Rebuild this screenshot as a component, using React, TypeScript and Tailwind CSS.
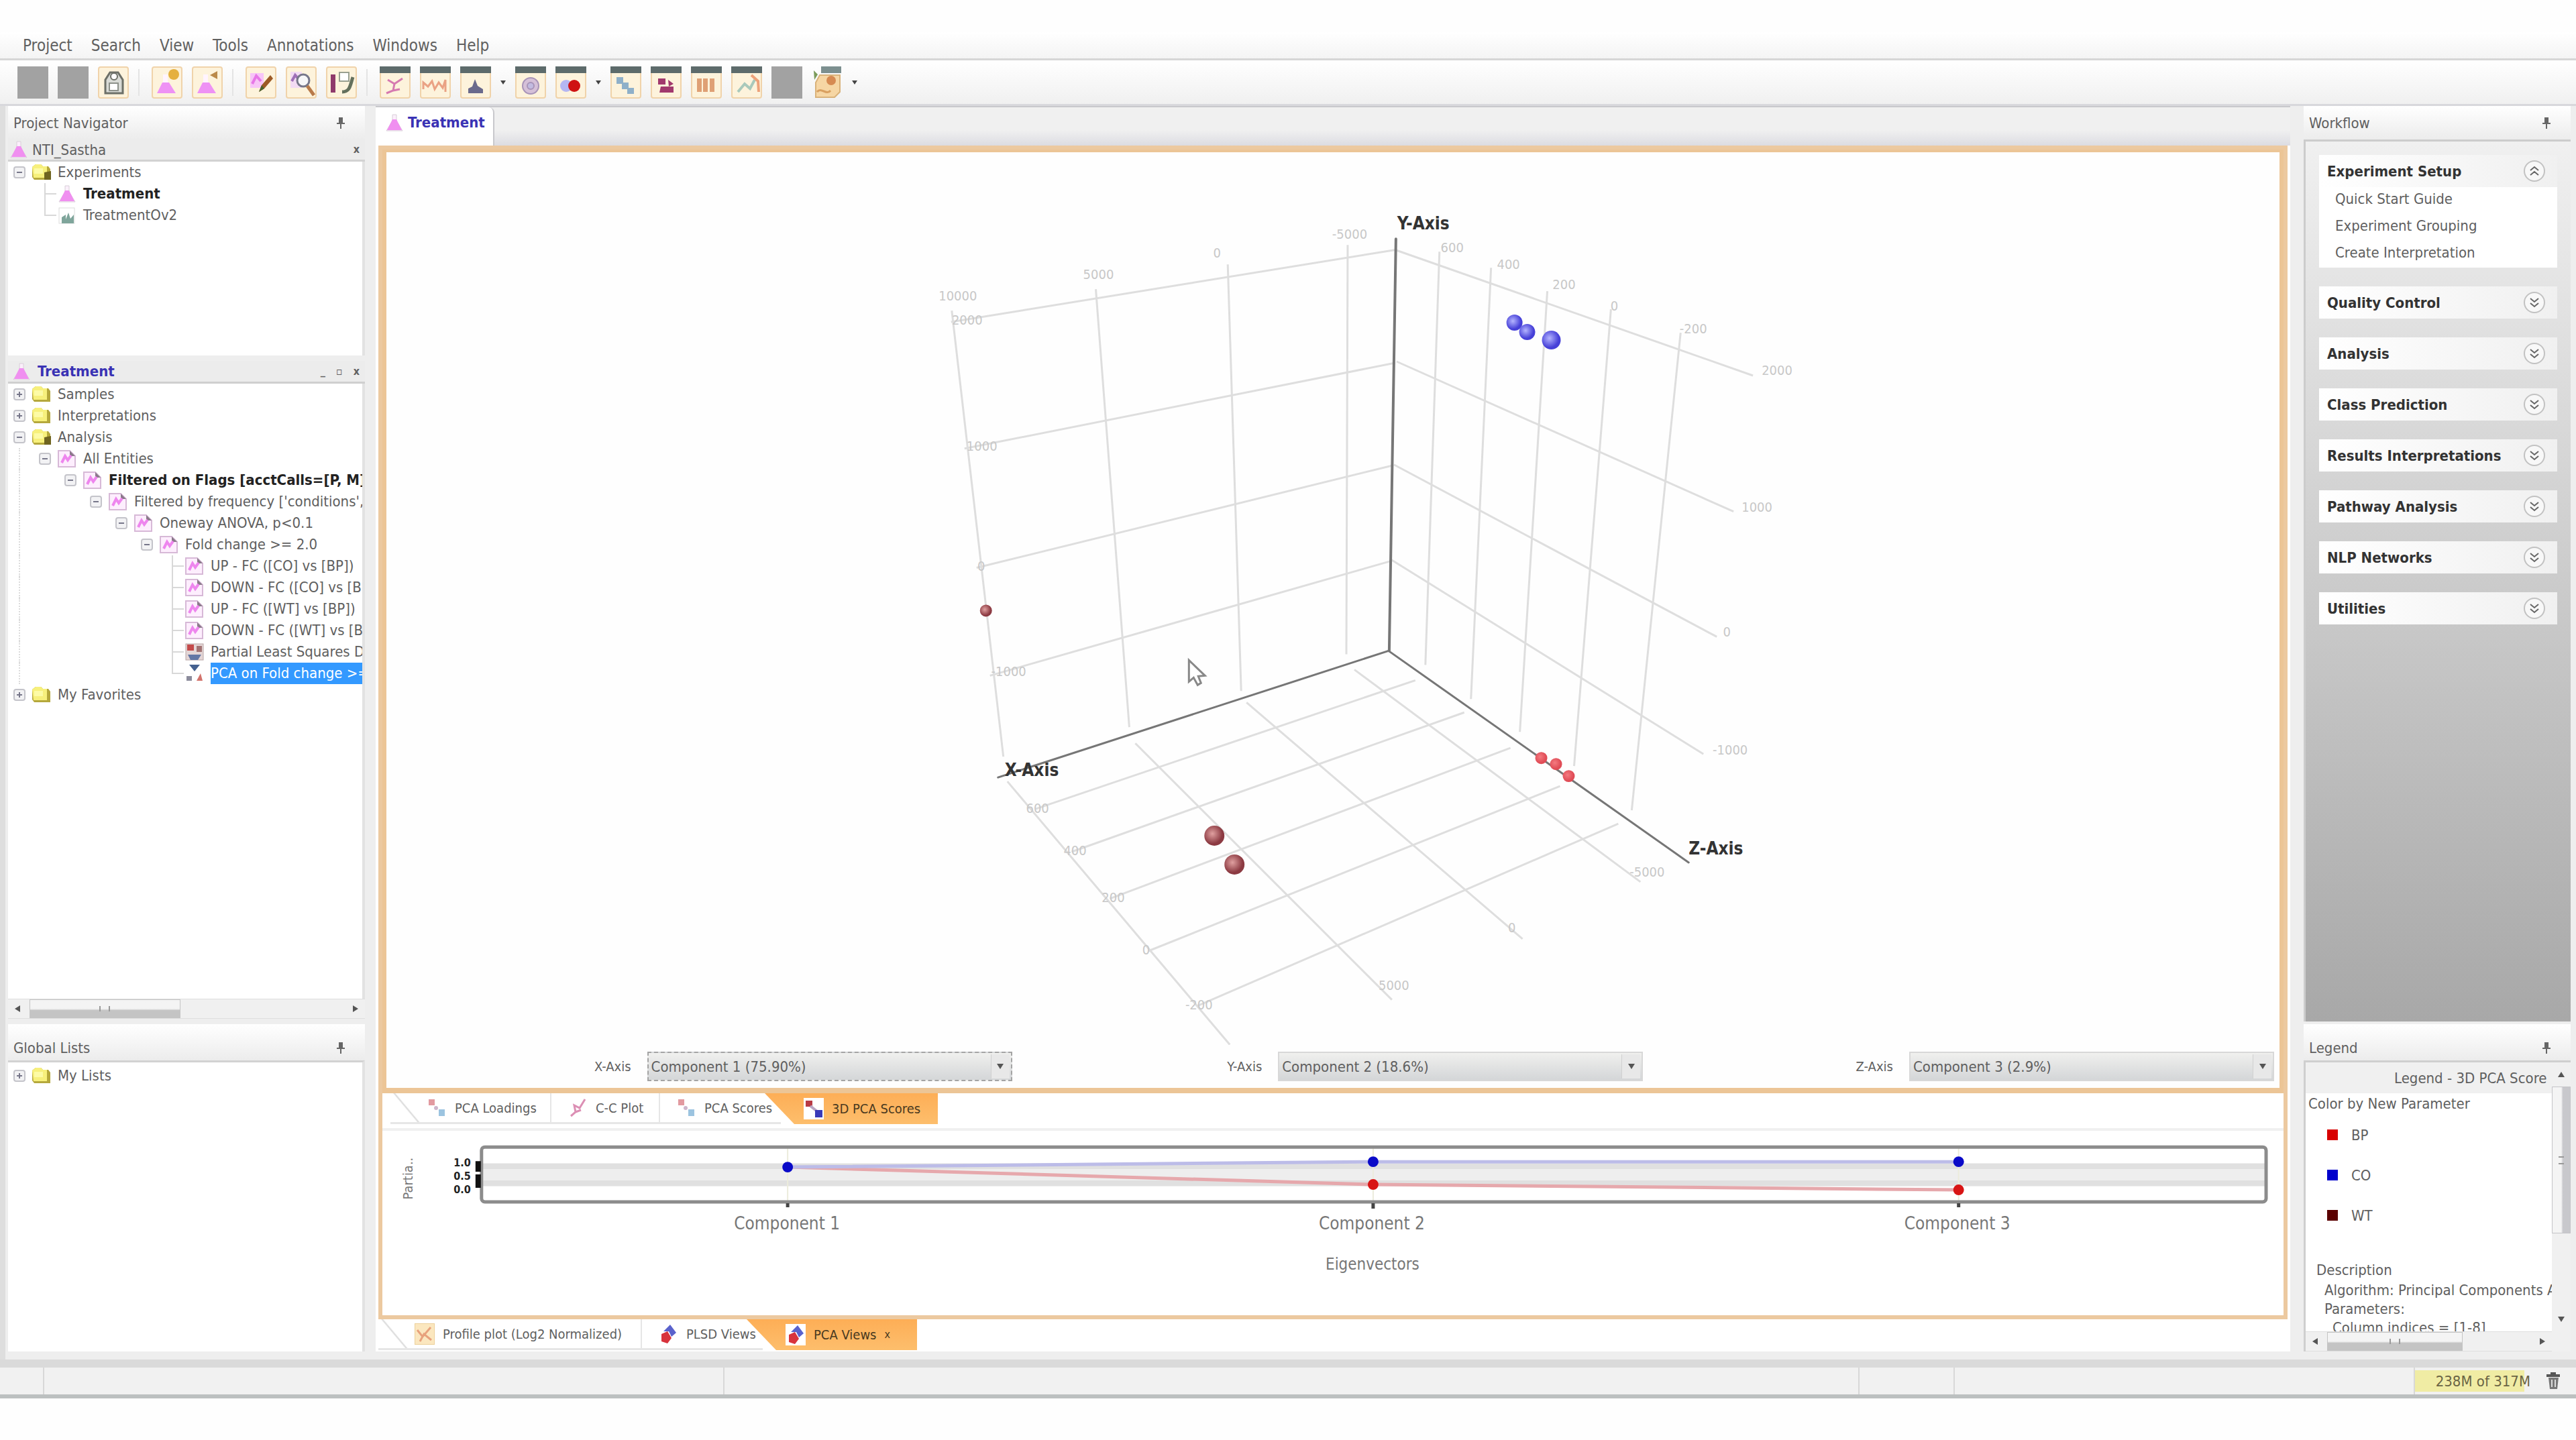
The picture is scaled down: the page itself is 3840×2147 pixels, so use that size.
import React, { useState } from 'react';
import clsx from 'clsx';

type IconName =
  | 'folder'
  | 'folderOpen'
  | 'flask'
  | 'chart'
  | 'list'
  | 'pls'
  | 'pca';

type TreeNode = {
  label: string;
  icon: IconName;
  level: number;
  leaf?: boolean;
  last?: boolean;
  bold?: boolean;
  selected?: boolean;
  open?: boolean;
};

const MENUS = ['Project', 'Search', 'View', 'Tools', 'Annotations', 'Windows', 'Help'];

const TOOLBAR = [
  ['blank', 'blank', 'open'],
  ['newFlask', 'flaskOut'],
  ['edit', 'find', 'sample'],
  ['scatter', 'profile', 'histogram', 'arrow', 'venn', 'redblue', 'arrow', 'matrix', 'heat', 'bars', 'trend', 'blank', 'script', 'arrow'],
];

const PROJECT_TREE: TreeNode[] = [
  { label: 'Experiments', icon: 'folderOpen', level: 0, open: true },
  { label: 'Treatment', icon: 'flask', level: 1, leaf: true, bold: true },
  { label: 'TreatmentOv2', icon: 'chart', level: 1, leaf: true, last: true },
];

const EXPERIMENT_TREE: TreeNode[] = [
  { label: 'Samples', icon: 'folder', level: 0 },
  { label: 'Interpretations', icon: 'folder', level: 0 },
  { label: 'Analysis', icon: 'folderOpen', level: 0, open: true },
  { label: 'All Entities', icon: 'list', level: 1, open: true },
  { label: 'Filtered on Flags [acctCalls=[P, M]', icon: 'list', level: 2, bold: true, open: true },
  { label: "Filtered by frequency ['conditions',", icon: 'list', level: 3, open: true },
  { label: 'Oneway ANOVA, p<0.1', icon: 'list', level: 4, open: true },
  { label: 'Fold change >= 2.0', icon: 'list', level: 5, open: true },
  { label: 'UP - FC ([CO] vs [BP])', icon: 'list', level: 6, leaf: true },
  { label: 'DOWN - FC ([CO] vs [B', icon: 'list', level: 6, leaf: true },
  { label: 'UP - FC ([WT] vs [BP])', icon: 'list', level: 6, leaf: true },
  { label: 'DOWN - FC ([WT] vs [B', icon: 'list', level: 6, leaf: true },
  { label: 'Partial Least Squares Di', icon: 'pls', level: 6, leaf: true },
  { label: 'PCA on Fold change >=', icon: 'pca', level: 6, leaf: true, last: true, selected: true },
  { label: 'My Favorites', icon: 'folder', level: 0 },
];

const WORKFLOW = [
  { title: 'Experiment Setup', items: ['Quick Start Guide', 'Experiment Grouping', 'Create Interpretation'] },
  { title: 'Quality Control', items: [] },
  { title: 'Analysis', items: [] },
  { title: 'Class Prediction', items: [] },
  { title: 'Results Interpretations', items: [] },
  { title: 'Pathway Analysis', items: [] },
  { title: 'NLP Networks', items: [] },
  { title: 'Utilities', items: [] },
];

const LEGEND = [
  { label: 'BP', color: 'bg-[#d80000]' },
  { label: 'CO', color: 'bg-[#0000cc]' },
  { label: 'WT', color: 'bg-[#5a0000]' },
];

const AXES = [
  { axis: 'X-Axis', value: 'Component 1 (75.90%)' },
  { axis: 'Y-Axis', value: 'Component 2 (18.6%)' },
  { axis: 'Z-Axis', value: 'Component 3 (2.9%)' },
];

const NodeIcon = ({ name }: { name: IconName }) => {
  switch (name) {
    case 'folder':
    case 'folderOpen':
      return (
        <svg viewBox="0 0 32 28" className="h-7 w-8 shrink-0">
          <path d="M2 6 L7 2 H15 L18 5 H26 L29 9 V25 H5 L2 21 Z" fill="#b5a83c" />
          <path d="M2 6 L7 2 H15 L18 5 H24 V22 H4 Z" fill="#f7f07c" />
          <path d="M5 8 H18 V16 H5 Z" fill="#fdfba6" />
          {name === 'folderOpen' && <path d="M20 14 L30 12 V25 H20 Z" fill="#6f6420" />}
        </svg>
      );
    case 'flask':
      return (
        <svg viewBox="0 0 32 28" className="h-7 w-8 shrink-0">
          <path d="M13 2 H19 V11 L28 26 H4 L13 11 Z" fill="#fbeffb" stroke="#d8cfd8" />
          <path d="M13 9 H19 L27 25 H5 Z" fill="#f08ff0" />
        </svg>
      );
    case 'chart':
      return (
        <svg viewBox="0 0 32 28" className="h-7 w-8 shrink-0">
          <rect x="4" y="3" width="23" height="23" fill="#fff" stroke="#dcdcdc" />
          <path d="M8 26 V17 L14 13 V20 L18 10 L21 19 L26 13 V26 Z" fill="#7fa59b" />
        </svg>
      );
    case 'list':
      return (
        <svg viewBox="0 0 32 28" className="h-7 w-8 shrink-0">
          <path d="M3 2 H20 L28 10 V26 H3 Z" fill="#fdeefd" stroke="#d7b9d7" strokeWidth="2" />
          <path d="M20 2 L28 10 H20 Z" fill="#8a7a8a" />
          <path d="M8 20 L13 10 L17 16 L22 9" fill="none" stroke="#ee86ee" strokeWidth="4" />
        </svg>
      );
    case 'pls':
      return (
        <svg viewBox="0 0 32 28" className="h-7 w-8 shrink-0">
          <rect x="3" y="2" width="26" height="24" fill="#e4d6d6" stroke="#b8a6a6" />
          <rect x="5" y="3" width="10" height="9" fill="#c44b4b" />
          <rect x="19" y="5" width="8" height="9" fill="#a27373" />
          <path d="M6 18 H26 L21 26 H10 Z" fill="#6377a5" />
        </svg>
      );
    case 'pca':
      return (
        <svg viewBox="0 0 32 28" className="h-7 w-8 shrink-0">
          <rect x="3" y="1" width="26" height="26" fill="#fff" />
          <path d="M8 1 L16 11 L24 1 Z" fill="#44608f" />
          <rect x="4" y="18" width="8" height="7" fill="#8c8c9c" />
          <path d="M19 25 L25 14 L28 25 Z" fill="#d2736c" />
        </svg>
      );
  }
};

const ToolGlyph = ({ name }: { name: string }) => {
  switch (name) {
    case 'open':
      return (
        <g>
          <path d="M11 40 V20 L18 9 H30 L37 20 V40 Z" fill="#d9dbd6" stroke="#6d7068" strokeWidth="3" />
          <circle cx="24" cy="15" r="5" fill="#fff" stroke="#6d7068" strokeWidth="2" />
          <rect x="17" y="25" width="13" height="11" fill="#fff" stroke="#8d918a" strokeWidth="2" />
        </g>
      );
    case 'newFlask':
      return (
        <g>
          <path d="M17 12 H24 V22 L36 40 H8 L17 22 Z" fill="#fff4ff" />
          <path d="M16 24 H26 L36 40 H8 Z" fill="#ee92f4" />
          <circle cx="33" cy="12" r="8" fill="#e5b03f" />
        </g>
      );
    case 'flaskOut':
      return (
        <g>
          <path d="M17 12 H24 V22 L36 40 H8 L17 22 Z" fill="#fff4ff" />
          <path d="M16 24 H26 L36 40 H8 Z" fill="#ee92f4" />
          <path d="M27 13 L38 7 V19 Z" fill="#bb8a4a" />
        </g>
      );
    case 'edit':
      return (
        <g>
          <path d="M7 10 H27 V32 H7 Z" fill="#f7c5f7" />
          <path d="M10 26 L16 14 L23 22" fill="none" stroke="#e777e7" strokeWidth="4" />
          <path d="M20 38 L24 28 L37 13 L41 18 L28 33 Z" fill="#9c5a26" />
          <path d="M20 38 L24 28 L28 33 Z" fill="#47632f" />
        </g>
      );
    case 'find':
      return (
        <g>
          <path d="M7 8 H24 V32 H7 Z" fill="#f3dbf3" />
          <path d="M9 22 L14 13 L20 20" fill="none" stroke="#a070b8" strokeWidth="4" />
          <circle cx="26" cy="21" r="9" fill="#f6f6f8" stroke="#77778a" strokeWidth="3" />
          <path d="M32 29 L42 43" stroke="#b87a4a" strokeWidth="5" />
        </g>
      );
    case 'sample':
      return (
        <g>
          <rect x="7" y="12" width="7" height="27" fill="#8f3a6b" />
          <path d="M20 9 H34 V22 H20 Z" fill="#fff" stroke="#99a090" strokeWidth="2" />
          <path d="M24 38 C36 38 36 28 40 16" fill="none" stroke="#64705c" strokeWidth="5" />
        </g>
      );
    case 'scatter':
      return <path d="M12 20 L22 26 L34 18 M22 26 L20 36 L10 40 M20 36 L30 34" fill="none" stroke="#d67ab0" strokeWidth="3" />;
    case 'profile':
      return <path d="M5 34 V24 L12 30 L18 22 L22 34 L28 24 L34 32 L38 20 V38" fill="none" stroke="#eaa284" strokeWidth="3" />;
    case 'histogram':
      return <path d="M12 40 V33 L18 30 L22 19 L26 29 L34 34 V40 Z" fill="#6a6a8c" />;
    case 'venn':
      return (
        <g fill="#d5c0d8" stroke="#a894b8" strokeWidth="2">
          <circle cx="23" cy="29" r="12" />
          <circle cx="23" cy="29" r="5" fill="#c2bbe0" />
        </g>
      );
    case 'redblue':
      return (
        <g>
          <circle cx="16" cy="29" r="9" fill="#b5b7f2" />
          <circle cx="28" cy="29" r="9" fill="#cf1212" />
        </g>
      );
    case 'matrix':
      return <path d="M9 16 H19 V24 H27 V32 H35 V41 H25 V34 H17 V26 H9 Z" fill="#8fb0c9" />;
    case 'heat':
      return (
        <g fill="#a1396d">
          <path d="M11 18 H22 V27 H11 Z M26 20 L34 26 L27 30 Z M15 30 H34 V39 H13 Z" />
        </g>
      );
    case 'bars':
      return <path d="M9 18 H16 V38 H9 Z M18 18 H25 V38 H18 Z M28 18 H35 V38 H28 Z" fill="#dfa075" />;
    case 'trend':
      return (
        <g fill="none" strokeWidth="4">
          <path d="M10 38 L20 26 L28 33 L35 20" stroke="#a9c9bb" />
          <path d="M30 13 L40 22 L41 38" stroke="#eda27a" />
        </g>
      );
    case 'script':
      return (
        <g>
          <path d="M12 13 H42 V38 L34 46 H6 V24 Z" fill="#f6d6a4" stroke="#d9b27a" strokeWidth="2" />
          <circle cx="29" cy="21" r="7" fill="#d68a52" />
          <path d="M8 38 C14 30 22 44 28 36" fill="none" stroke="#d9a060" strokeWidth="3" />
          <path d="M3 6 L9 12 L4 20 Z" fill="#7a9a5a" />
        </g>
      );
    default:
      return null;
  }
};

const BARRED = ['scatter', 'profile', 'histogram', 'venn', 'redblue', 'matrix', 'heat', 'bars', 'trend'];

const ToolButton = ({ name }: { name: string }) => {
  if (name === 'arrow') {
    return (
      <button aria-label="More" className="w-2">
        <svg viewBox="0 0 8 8" className="h-2 w-2">
          <path d="M0 1 H8 L4 7 Z" fill="#444" />
        </svg>
      </button>
    );
  }
  return (
    <button aria-label={name} className="h-12 w-[46px]">
      <svg viewBox="0 0 46 48" className="h-12 w-[46px]">
        {name === 'blank' && <rect width="46" height="48" fill="#a2a2a2" />}
        {name !== 'blank' && name !== 'script' && (
          <rect x="1" y="1" width="44" height="46" rx="3" fill="#fdf3dc" stroke="#f0d3aa" strokeWidth="2" />
        )}
        {BARRED.includes(name) && <rect width="46" height="10" fill="#5d6b6b" />}
        {name === 'script' && <rect x="14" width="30" height="10" fill="#7c8f8f" />}
        <ToolGlyph name={name} />
      </svg>
    </button>
  );
};

const PinIcon = () => (
  <svg viewBox="0 0 16 20" className="h-5 w-4">
    <path d="M5 2 H11 V10 H14 V12 H9 V19 H7 V12 H2 V10 H5 Z" fill="#666" />
  </svg>
);

const Triangle = ({ dir }: { dir: 'left' | 'right' | 'up' | 'down' }) => (
  <svg
    viewBox="0 0 12 12"
    className={clsx('h-3 w-3 shrink-0', {
      'rotate-90': dir === 'right',
      '-rotate-90': dir === 'left',
      'rotate-180': dir === 'down',
    })}
  >
    <path d="M1 10 L6 2 L11 10 Z" fill="#555" />
  </svg>
);

const PanelHeader = ({ title, tall }: { title: string; tall?: boolean }) => (
  <div
    className={clsx(
      'flex shrink-0 items-center justify-between bg-linear-to-b from-white to-[#ececec] pr-7 pl-2',
      tall ? 'h-[54px] pt-4' : 'h-[50px]',
    )}
  >
    <h2>{title}</h2>
    <button aria-label={`Pin ${title}`}>
      <PinIcon />
    </button>
  </div>
);

const TreeRow = ({ node, guide }: { node: TreeNode; guide?: boolean }) => (
  <li className="flex h-8 items-center whitespace-nowrap">
    {node.level > 0 && (
      <span className="h-full shrink-0" style={{ width: node.level * 38 }}>
        {guide && <span className="ml-4 block h-full border-l-2 border-dotted border-[#dcdcdc]" />}
      </span>
    )}
    {node.leaf ? (
      <svg viewBox="0 0 34 32" className="h-8 w-[34px] shrink-0">
        <path d={node.last ? 'M17 0 V16 H34' : 'M17 0 V32 M17 16 H34'} fill="none" stroke="#d8d8d8" strokeWidth="2" />
      </svg>
    ) : (
      <button aria-label={`Toggle ${node.label}`} className="flex w-[34px] shrink-0 justify-center">
        <svg viewBox="0 0 18 18" className="h-[18px] w-[18px]">
          <rect x="1" y="1" width="16" height="16" rx="3" fill="#f2f2f4" stroke="#c4c4ca" strokeWidth="2" />
          <path d={node.open ? 'M5 9 H13' : 'M5 9 H13 M9 5 V13'} stroke="#77778a" strokeWidth="2" />
        </svg>
      </button>
    )}
    <NodeIcon name={node.icon} />
    <span
      className={clsx(
        'ml-2 h-8 leading-8',
        node.bold && 'font-bold text-[#222]',
        node.selected && 'flex-1 bg-[#3399ff] text-white',
      )}
    >
      {node.label}
    </span>
  </li>
);

const HScroll = ({ thumb }: { thumb: string }) => (
  <div className="flex h-[30px] shrink-0 items-center gap-3 border-y border-[#dedede] bg-[#f0f0f0] px-2">
    <Triangle dir="left" />
    <div className="h-full flex-1">
      <div
        className={clsx(
          'flex h-full items-center justify-center border border-[#c4c4c4] bg-linear-to-b from-[#f4f4f4] from-50% to-[#c4c4c4] to-60%',
          thumb,
        )}
      >
        <span className="h-2 w-4 border-x-2 border-[#999]" />
      </div>
    </div>
    <Triangle dir="right" />
  </div>
);

const LeftSide = () => (
  <aside className="flex w-[532px] shrink-0 flex-col">
    <PanelHeader title="Project Navigator" />
    <div className="flex h-[33px] items-center justify-between border-b-3 border-[#d2d2d2] bg-[#ececec] pr-2">
      <span className="flex items-center gap-1">
        <NodeIcon name="flask" />
        NTI_Sastha
      </span>
      <button aria-label="Close project" className="text-base font-bold">x</button>
    </div>
    <ul className="h-[289px] overflow-hidden border-r-4 border-[#e2e2e2] bg-white">
      {PROJECT_TREE.map((node) => (
        <TreeRow key={node.label} node={node} />
      ))}
    </ul>
    <div className="mt-2 flex h-[34px] items-center justify-between border-b-3 border-[#cfcfcf] bg-[#ececec] pr-2">
      <span className="flex items-center gap-2 pl-1 font-bold text-[#3a32b4]">
        <NodeIcon name="flask" />
        Treatment
      </span>
      <span className="flex gap-4 text-base font-bold">
        <button aria-label="Minimize">_</button>
        <button aria-label="Float">▫</button>
        <button aria-label="Close">x</button>
      </span>
    </div>
    <ul className="min-h-0 flex-1 overflow-hidden border-r-4 border-[#e2e2e2] bg-white">
      {EXPERIMENT_TREE.map((node, i) => (
        <TreeRow key={i} node={node} guide={node.level > 0} />
      ))}
    </ul>
    <HScroll thumb="w-[48%]" />
    <div className="h-2" />
    <PanelHeader title="Global Lists" tall />
    <ul className="h-[434px] shrink-0 border-t-3 border-r-4 border-[#d2d2d2] border-r-[#e2e2e2] bg-white pt-1">
      <TreeRow node={{ label: 'My Lists', icon: 'folder', level: 0 }} />
    </ul>
  </aside>
);

// [x1, y1, x2, y2] segments of the three walls of the plot box
const GRID = [
  [1417, 481, 2082, 373], [1437, 670, 2080, 542], [1455, 848, 2077, 695], [1475, 1009, 2073, 838],
  [1418, 464, 1495, 1130], [1633, 432, 1683, 1086], [1830, 395, 1850, 1032], [2009, 366, 2007, 977],
  [2082, 374, 2614, 561], [2082, 540, 2585, 764], [2078, 694, 2560, 951], [2074, 836, 2540, 1126],
  [2146, 376, 2125, 993], [2223, 400, 2193, 1044], [2307, 435, 2266, 1093], [2402, 462, 2347, 1144],
  [2506, 497, 2433, 1210],
  [1501, 1167, 1833, 1560], [1692, 1110, 2075, 1493], [1858, 1049, 2270, 1402], [2019, 1000, 2446, 1317],
  [1543, 1208, 2110, 1016], [1597, 1272, 2183, 1064], [1654, 1342, 2252, 1117], [1712, 1420, 2326, 1174],
  [1785, 1502, 2413, 1230],
];

const TICKS: [number, number, string][] = [
  [1427, 449, '10000'], [1637, 417, '5000'], [1814, 385, '0'], [2012, 357, '-5000'],
  [1441, 485, '2000'], [1463, 673, '1000'], [1462, 852, '0'], [1503, 1010, '-1000'],
  [2165, 377, '600'], [2249, 402, '400'], [2332, 432, '200'], [2407, 464, '0'], [2525, 498, '-200'],
  [2650, 560, '2000'], [2620, 764, '1000'], [2575, 951, '0'], [2580, 1127, '-1000'],
  [1546, 1214, '600'], [1602, 1277, '400'], [1659, 1347, '200'], [1708, 1425, '0'], [1787, 1507, '-200'],
  [2078, 1478, '5000'], [2254, 1392, '0'], [2456, 1309, '-5000'],
];

const POINTS: [number, number, number, string][] = [
  [1469, 912, 9, 'url(#brown)'], [1810, 1248, 15, 'url(#brown)'], [1840, 1291, 15, 'url(#brown)'],
  [2258, 482, 12, 'url(#blue)'], [2277, 496, 12, 'url(#blue)'], [2313, 508, 14, 'url(#blue)'],
  [2298, 1132, 9, 'url(#red)'], [2320, 1141, 9, 'url(#red)'], [2339, 1159, 9, 'url(#red)'],
];

const ScorePlot = () => (
  <svg viewBox="574 229 2826 1330" className="min-h-0 w-full flex-1">
    <defs>
      <radialGradient id="brown" cx="0.4" cy="0.4">
        <stop offset="0" stopColor="#e0a0a0" />
        <stop offset="1" stopColor="#8c3a42" />
      </radialGradient>
      <radialGradient id="blue" cx="0.4" cy="0.4">
        <stop offset="0" stopColor="#b4b4ff" />
        <stop offset="1" stopColor="#4640d8" />
      </radialGradient>
      <radialGradient id="red" cx="0.4" cy="0.4">
        <stop offset="0" stopColor="#f47a80" />
        <stop offset="1" stopColor="#e04c56" />
      </radialGradient>
    </defs>
    <g stroke="#dedede" strokeWidth="3">
      {GRID.map(([x1, y1, x2, y2], i) => (
        <line key={i} x1={x1} y1={y1} x2={x2} y2={y2} />
      ))}
    </g>
    <g fill="#c8c8c8" fontSize="20" textAnchor="middle">
      {TICKS.map(([x, y, label], i) => (
        <text key={i} x={x} y={y}>{label}</text>
      ))}
    </g>
    <g stroke="#767676" strokeWidth="3" strokeLinecap="round">
      <line x1="2081" y1="357" x2="2071" y2="972" strokeWidth="4" />
      <line x1="2070" y1="972" x2="1487" y2="1161" />
      <line x1="2070" y1="972" x2="2518" y2="1288" />
    </g>
    {POINTS.map(([cx, cy, r, fill], i) => (
      <circle key={i} cx={cx} cy={cy} r={r} fill={fill} />
    ))}
    <g fill="#333" fontSize="26" fontWeight="bold">
      <text x="2083" y="343">Y-Axis</text>
      <text x="1497" y="1159">X-Axis</text>
      <text x="2518" y="1276">Z-Axis</text>
    </g>
    <path d="M1772 986 V1018 L1779 1012 L1785 1023 L1790 1020 L1786 1010 L1796 1009 Z" fill="#fff" stroke="#888" strokeWidth="3" />
  </svg>
);

const EigenPlot = () => (
  <svg viewBox="568 1687 2838 275" className="block h-[275px] w-full">
    <rect x="717" y="1735" width="2662" height="35" fill="#eeeeee" />
    <path d="M717 1740 H3379 M717 1765 H3379" stroke="#e0e0e0" strokeWidth="8" />
    <path d="M1173 1712 V1792 M2047 1712 V1792 M2921 1712 V1792" stroke="#ececdc" strokeWidth="2" />
    <path d="M1173 1741 L2047 1767 L2921 1775" fill="none" stroke="#e6a8ac" strokeWidth="5" />
    <path d="M1173 1741 L2047 1733 H2921" fill="none" stroke="#bcbce8" strokeWidth="5" />
    <rect x="716" y="1711" width="2664" height="82" rx="5" fill="none" stroke="#8c8c8c" strokeWidth="5" />
    <path d="M1173 1795 V1801 M2047 1795 V1803 M2921 1795 V1801" stroke="#444" strokeWidth="5" />
    <path d="M711 1732 V1748 M711 1752 V1772" stroke="#111" strokeWidth="8" />
    <g fill="#0a0ac8">
      <circle cx="1173" cy="1741" r="8" />
      <circle cx="2047" cy="1733" r="8" />
      <circle cx="2921" cy="1733" r="8" />
    </g>
    <g fill="#d81414">
      <circle cx="2047" cy="1767" r="8" />
      <circle cx="2921" cy="1775" r="8" />
    </g>
    <g fill="#222" fontSize="16" fontWeight="bold" textAnchor="end">
      <text x="700" y="1740">1.0</text>
      <text x="700" y="1760">0.5</text>
      <text x="700" y="1780">0.0</text>
    </g>
    <g fill="#777" fontSize="26" textAnchor="middle">
      <text x="1172" y="1834">Component 1</text>
      <text x="2045" y="1834">Component 2</text>
      <text x="2919" y="1834">Component 3</text>
      <text x="2046" y="1894" fontSize="24">Eigenvectors</text>
      <text transform="translate(613 1758) rotate(-90)" fontSize="20">Partia..</text>
    </g>
  </svg>
);

const TabIcon = ({ kind }: { kind: string }) => (
  <svg viewBox="0 0 30 32" className="h-8 w-[30px] shrink-0">
    {kind === 'dots' && (
      <g>
        <rect x="3" y="3" width="9" height="9" fill="#e29aa0" />
        <circle cx="14" cy="16" r="3" fill="#cdb6cc" />
        <rect x="18" y="18" width="9" height="10" fill="#9cc4e0" />
      </g>
    )}
    {kind === 'dots3d' && (
      <g>
        <rect width="30" height="32" fill="#fff" />
        <rect x="3" y="4" width="10" height="9" fill="#b83a44" />
        <path d="M10 12 L20 20" stroke="#b9a5c4" strokeWidth="4" />
        <rect x="17" y="18" width="11" height="11" fill="#3a3ab8" />
      </g>
    )}
    {kind === 'curve' && <path d="M5 28 L12 22 L10 12 L18 16 L26 3 M12 22 L20 19" fill="none" stroke="#dc8fb4" strokeWidth="3" />}
    {kind === 'plot' && (
      <g>
        <rect width="30" height="32" fill="#fbe7bf" stroke="#ecd09a" strokeWidth="2" />
        <path d="M4 10 L12 20 L24 6 M8 27 L14 16 L25 25" fill="none" stroke="#e8a27c" strokeWidth="3" />
      </g>
    )}
    {kind === 'views' && (
      <g>
        <rect width="30" height="32" fill="#fff" />
        <path d="M8 12 L18 2 L27 14 L20 20 L16 12 Z" fill="#5a62cc" />
        <path d="M5 16 L14 12 L20 22 L14 30 L5 27 Z" fill="#d8333c" />
      </g>
    )}
  </svg>
);

type TabDef = { label: string; icon: string; width: string; closable?: boolean };

const VIEW_TABS: TabDef[] = [
  { label: 'PCA Loadings', icon: 'dots', width: 'w-60 pl-[54px]' },
  { label: 'C-C Plot', icon: 'curve', width: 'w-[162px] pl-6' },
  { label: 'PCA Scores', icon: 'dots', width: 'w-[180px] pl-6' },
  { label: '3D PCA Scores', icon: 'dots3d', width: 'w-[258px] pl-[58px] -ml-6' },
];

const GROUP_TABS: TabDef[] = [
  { label: 'Profile plot (Log2 Normalized)', icon: 'plot', width: 'w-[393px] pl-[54px]' },
  { label: 'PLSD Views', icon: 'views', width: 'w-[180px] pl-6' },
  { label: 'PCA Views', icon: 'views', width: 'w-[254px] pl-[58px] -ml-6', closable: true },
];

const BottomTabs = ({ tabs }: { tabs: TabDef[] }) => {
  const [active, setActive] = useState(tabs.length - 1);
  return (
    <div role="tablist" className="flex h-12 shrink-0 items-start bg-white">
      {tabs.map((tab, i) => (
        <button
          key={tab.label}
          role="tab"
          aria-selected={i === active}
          onClick={() => setActive(i)}
          className={clsx(
            'flex h-[46px] items-center gap-3 overflow-hidden whitespace-nowrap text-xl',
            tab.width,
            i === active
              ? 'z-10 bg-linear-to-b from-[#fdae56] to-[#fdbe6c] text-[#4a3a20] [clip-path:polygon(0_0,100%_0,100%_100%,44px_100%)]'
              : 'border-b-3 border-[#e6e6e6] bg-white',
            i !== active && i < tabs.length - 2 && 'border-r-2',
            i === 0 && i !== active && 'bg-linear-[50deg,#ffffff_0px,#ffffff_30px,#d8d8d8_32px,#ffffff_34px]',
          )}
        >
          <TabIcon kind={tab.icon} />
          <span>{tab.label}</span>
          {tab.closable && <span className="text-base">x</span>}
        </button>
      ))}
    </div>
  );
};

const Center = () => (
  <main className="mr-5 ml-4 flex min-w-0 flex-1 flex-col bg-white">
    <div className="flex h-[59px] shrink-0 items-end border-t-2 border-[#c8c8cc] bg-linear-to-b from-[#f0f0f0] from-60% to-[#dcdce2]">
      <button className="flex h-full items-center gap-1 rounded-tr-lg border-r-2 border-[#c8c8cc] bg-white px-3 pb-3 font-bold text-[#3a32b4]">
        <NodeIcon name="flask" />
        Treatment
      </button>
    </div>
    <div className="mx-1 flex min-h-0 flex-1 flex-col border-6 border-[#ecc9a0] bg-white">
      <div className="flex min-h-0 flex-1 flex-col border-x-6 border-t-4 border-b-8 border-[#ecc596] bg-[#fefefe]">
        <ScorePlot />
        <div className="grid h-16 shrink-0 grid-cols-3 items-center">
          {AXES.map(({ axis, value }, i) => (
            <div key={axis} className="flex items-center justify-end gap-6 pr-2">
              <label htmlFor={axis} className="text-xl">{axis}</label>
              <div className="relative w-7/12">
                <select
                  id={axis}
                  className={clsx(
                    'h-11 w-full appearance-none border-2 bg-linear-to-b from-[#f0f0ee] to-[#d4d6d8] px-1',
                    i === 0 ? 'border-dashed border-[#a4a4a4]' : 'border-[#d8d8d8]',
                  )}
                >
                  <option>{value}</option>
                </select>
                <span className="pointer-events-none absolute inset-y-1 right-1 flex w-7 items-center justify-center border-l border-[#d0d0d0] bg-[#e8e8e8]">
                  <Triangle dir="down" />
                </span>
              </div>
            </div>
          ))}
        </div>
      </div>
      <div className="flex h-[52px] shrink-0 pl-3">
        <BottomTabs tabs={VIEW_TABS} />
      </div>
      <div className="h-1 shrink-0 bg-[#f0f0f0]" />
      <EigenPlot />
    </div>
    <div className="pl-1">
      <BottomTabs tabs={GROUP_TABS} />
    </div>
  </main>
);

const RightSide = () => (
  <aside className="flex w-[398px] shrink-0 flex-col">
    <PanelHeader title="Workflow" />
    <div className="flex min-h-0 flex-1 flex-col gap-7 border-t-3 border-l-3 border-[#cccccc] bg-linear-to-b from-[#f0f0f0] to-[#a8a8a8] px-5 pt-5">
      {WORKFLOW.map(({ title, items }) => (
        <section key={title}>
          <button className="flex h-12 w-full items-center justify-between bg-linear-to-r from-white to-[#f0f0f0] pr-4 pl-3">
            <span className="font-bold whitespace-nowrap text-[#333]">{title}</span>
            <svg viewBox="0 0 36 36" className="h-9 w-9 shrink-0">
              <circle cx="18" cy="18" r="15" fill="#f8f8f8" stroke="#c2c2c2" strokeWidth="2" />
              <path d={items.length ? 'M12 17 L18 12 L24 17 M12 24 L18 19 L24 24' : 'M12 12 L18 17 L24 12 M12 19 L18 24 L24 19'} fill="none" stroke="#666" strokeWidth="2" />
            </svg>
          </button>
          {items.length > 0 && (
            <ul className="bg-white pl-6">
              {items.map((item) => (
                <li key={item} className="h-10 leading-9">
                  <a href="#">{item}</a>
                </li>
              ))}
            </ul>
          )}
        </section>
      ))}
    </div>
    <div className="h-1" />
    <PanelHeader title="Legend" tall />
    <div className="flex h-[434px] shrink-0 flex-col border-t-3 border-l-3 border-[#cfcfcf]">
      <div className="flex min-h-0 flex-1">
        <div className="min-w-0 flex-1 overflow-hidden bg-white whitespace-nowrap">
          <h3 className="flex h-[46px] items-center bg-[#f0f0f0] pl-[132px]">Legend - 3D PCA Score</h3>
          <p className="pl-1 leading-8">Color by New Parameter</p>
          <ul className="pl-8">
            {LEGEND.map(({ label, color }) => (
              <li key={label} className="flex h-[60px] items-center gap-5">
                <span className={clsx('h-4 w-4', color)} />
                {label}
              </li>
            ))}
          </ul>
          <div className="pt-9 pl-4 leading-7">
            <p className="leading-8">Description</p>
            <div className="pl-3">
              <p>Algorithm: Principal Components An</p>
              <p>Parameters:</p>
              <p className="pl-3">Column indices = [1-8]</p>
            </div>
          </div>
        </div>
        <div className="flex w-7 flex-col items-center gap-3 bg-[#f0f0f0] py-3">
          <Triangle dir="up" />
          <div className="w-full flex-1">
            <div className="flex h-2/3 items-center justify-center border border-[#c4c4c8] bg-linear-to-r from-[#f4f4f4] from-50% to-[#c8c8cc] to-60%">
              <span className="h-3 w-2 border-y-2 border-[#999]" />
            </div>
          </div>
          <Triangle dir="down" />
        </div>
      </div>
      <div className="flex bg-[#f0f0f0]">
        <div className="flex-1">
          <HScroll thumb="w-2/3" />
        </div>
        <div className="w-7" />
      </div>
    </div>
  </aside>
);

export default function App() {
  return (
    <div className="flex h-screen flex-col overflow-hidden bg-[#eeeeee] font-['DejaVu_Sans_Condensed','DejaVu_Sans',sans-serif] text-[22px] text-[#606060]">
      <div className="h-12 shrink-0 bg-[#fefefe]" />
      <nav className="flex h-[42px] shrink-0 items-center gap-7 border-b-3 border-[#d6d6d6] bg-linear-to-b from-white to-[#f4f4f4] pl-[34px]">
        {MENUS.map((menu) => (
          <button key={menu} className="text-2xl">{menu}</button>
        ))}
      </nav>
      <div className="flex h-[68px] shrink-0 items-center gap-[14px] border-b-3 border-[#d8d8dc] bg-linear-to-b from-white to-[#f0f0f0] pl-[26px]">
        {TOOLBAR.map((group, g) => (
          <React.Fragment key={g}>
            {g > 0 && <span className="h-10 w-[6px] border-l-2 border-[#e4e4e4]" />}
            {group.map((name, i) => (
              <ToolButton key={i} name={name} />
            ))}
          </React.Fragment>
        ))}
      </div>
      <div className="flex min-h-0 flex-1 border-l-8 border-[#dedede] pr-2 pb-3 pl-1">
        <LeftSide />
        <Center />
        <RightSide />
      </div>
      <div className="h-3 shrink-0 bg-[#dadada]" />
      <footer className="flex h-[46px] shrink-0 items-center border-b-6 border-[#bcc0c0] bg-[#f1f1f1]">
        <span className="h-full w-[66px] border-r-2 border-[#d8d8d8]" />
        <span className="h-full w-[1014px] border-r-2 border-[#d8d8d8]" />
        <span className="h-full flex-1 border-r-2 border-[#d8d8d8]" />
        <span className="h-full w-[142px] border-r-2 border-[#d8d8d8]" />
        <span className="h-full w-[686px] border-r-2 border-[#d8d8d8]" />
        <span className="flex h-8 w-[172px] items-center justify-end bg-linear-to-r from-[#f0eca4] from-95% to-[#f1f1f1] to-95% whitespace-nowrap text-[#6a6444]">
          238M of 317M
        </span>
        <button aria-label="Collect garbage" className="mx-5 h-7 w-7">
          <svg viewBox="0 0 28 28" className="h-7 w-7">
            <path d="M4 6 H24 M10 3 H18" stroke="#555" strokeWidth="4" />
            <path d="M7 9 H22 L20 26 H9 Z" fill="#777" />
            <path d="M12 12 V23 M17 12 V23" stroke="#ddd" strokeWidth="2" />
          </svg>
        </button>
      </footer>
      <div className="h-[62px] shrink-0 bg-[#fefefe]" />
    </div>
  );
}
